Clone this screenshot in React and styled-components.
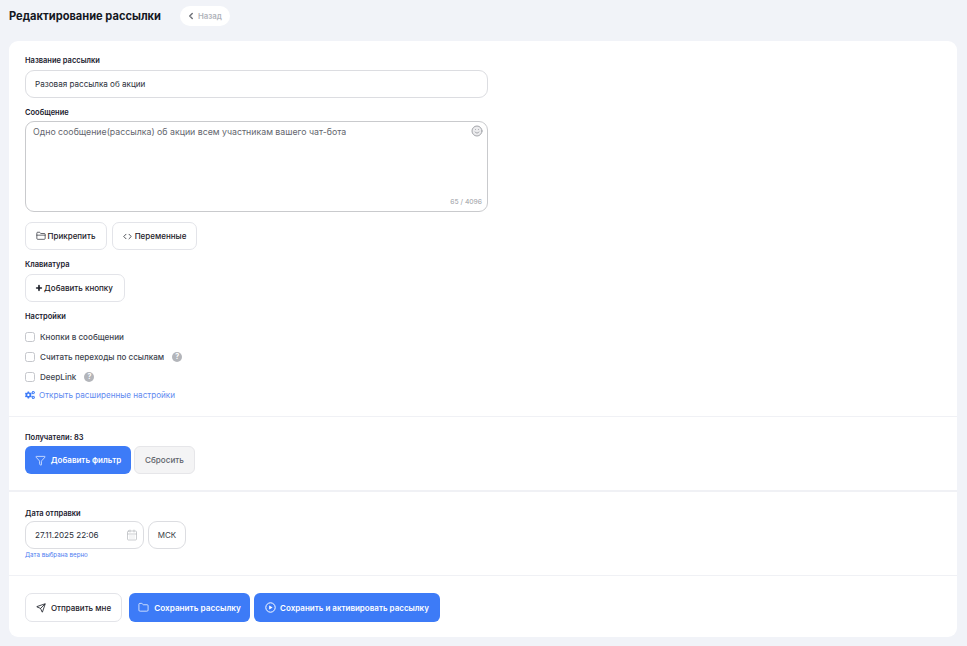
import React from "react";
import styled, { createGlobalStyle } from "styled-components";
import { ChevronLeft, Folder, FolderClosed, Code, Plus, Filter, CalendarDays, Send, Smile } from "lucide-react";
import { FaCogs } from "react-icons/fa";

const GlobalStyle = createGlobalStyle`
    html, body {
        margin: 0;
        padding: 0;
        background-color: #f1f3f8;
        font-family: Inter, "Liberation Sans", sans-serif;
        color: #1b1f2a;
    }
    * {
        box-sizing: border-box;
    }
`;

const Page = styled.div`
    width: 967px;
    height: 646px;
    padding: 6px 10px 9px 9px;
    display: flex;
    flex-direction: column;
    overflow: hidden;
`;

const Header = styled.div`
    display: flex;
    align-items: center;
    gap: 19px;
    height: 20px;
    margin-bottom: 15px;
`;

const Title = styled.h1`
    margin: 0;
    font-size: 11.1px;
    font-weight: 700;
    color: #14171f;
`;

const BackButton = styled.button`
    display: flex;
    align-items: center;
    gap: 2px;
    height: 20px;
    width: 50px;
    padding: 0 0 0 6px;
    border: none;
    border-radius: 10px;
    background: #fff;
    color: #b0b3ba;
    font: 600 7.8px Inter, sans-serif;
    svg {
        color: #6f7279;
    }
`;

const Card = styled.main`
    flex: 1;
    background: #fff;
    border-radius: 9px;
    display: flex;
    flex-direction: column;
`;

const Section = styled.section`
    padding: ${(p) => p.$padding};
    border-bottom: ${(p) => p.$line || 0}px solid #f0f1f5;
    height: ${(p) => p.$height}px;
    flex: none;
`;

const Label = styled.div`
    font-size: 7.5px;
    font-weight: 600;
    line-height: 12px;
    color: #1a202e;
    margin-bottom: ${(p) => p.$gap ?? 3}px;
`;

const Field = styled.div`
    width: 463px;
    height: 28px;
    border: 1px solid #dcdde1;
    border-radius: 9px;
    padding: 0 9px;
    display: flex;
    align-items: center;
    font-size: 8.1px;
    color: #2b2f3a;
    margin-bottom: 9px;
`;

const MessageBox = styled.div`
    position: relative;
    width: 463px;
    height: 91px;
    border: 1px solid #c9cacd;
    border-radius: 9px;
    padding: 4px 7px;
    font-size: 8.77px;
    line-height: 12px;
    color: #63666e;
    margin-bottom: 10px;
`;

const EmojiIcon = styled.span`
    position: absolute;
    top: 3px;
    right: 4px;
    display: flex;
    color: #a3a5aa;
    svg {
        fill: #ececee;
    }
`;

const Counter = styled.span`
    position: absolute;
    right: 5px;
    bottom: 5px;
    font-size: 6.8px;
    line-height: 9px;
    color: #9a9da4;
`;

const Row = styled.div`
    display: flex;
    gap: ${(p) => p.$gap ?? 5}px;
    margin-bottom: ${(p) => p.$bottom ?? 0}px;
`;

const OutlineButton = styled.button`
    display: flex;
    align-items: center;
    justify-content: center;
    gap: ${(p) => p.$gap ?? 3}px;
    width: ${(p) => p.$width}px;
    height: ${(p) => p.$height ?? 28}px;
    padding: 0 ${(p) => p.$right ?? 0}px 0 0;
    background: #fff;
    border: 1px solid #e3e4e9;
    border-radius: 7px;
    color: #1d2029;
    font: 500 8px Inter, sans-serif;
`;

const BlueButton = styled.button`
    display: flex;
    align-items: center;
    justify-content: center;
    gap: ${(p) => p.$gap ?? 5}px;
    width: ${(p) => p.$width}px;
    height: ${(p) => p.$height ?? 28}px;
    padding: 0;
    background: #3d7bf7;
    border: none;
    border-radius: 6px;
    color: #fff;
    font: 600 ${(p) => p.$size ?? 8}px Inter, sans-serif;
`;

const ResetButton = styled.button`
    width: 61px;
    height: 28px;
    padding: 0;
    background: #f4f4f5;
    border: 1px solid #e6e6e9;
    border-radius: 6px;
    color: #60646c;
    font: 500 8.1px Inter, sans-serif;
`;

const CheckRow = styled.label`
    display: flex;
    align-items: center;
    height: 10px;
    margin-bottom: 10px;
    font-size: 8.1px;
    font-weight: 500;
    color: #41454f;
`;

const CheckBox = styled.span`
    width: 10px;
    height: 10px;
    border: 1px solid #c5c7cc;
    border-radius: 2.5px;
    margin-right: 5px;
`;

const Hint = styled.span`
    width: 10px;
    height: 10px;
    margin-left: 8px;
    border-radius: 50%;
    background: #b3b5ba;
    color: #fff;
    font-size: 7px;
    font-weight: 700;
    line-height: 10px;
    text-align: center;
`;

const AdvancedLink = styled.a`
    display: flex;
    align-items: center;
    gap: 4px;
    font-size: 8.15px;
    line-height: 10px;
    color: #5f8af0;
    margin-top: -2px;
    svg {
        color: #3d7bf7;
    }
`;

const DateField = styled.div`
    width: 119px;
    height: 28px;
    border: 1px solid #dcdde1;
    border-radius: 9px;
    padding: 0 5px 0 9px;
    display: flex;
    align-items: center;
    justify-content: space-between;
    font-size: 8.1px;
    color: #2b2f3a;
    svg {
        color: #b5b7bc;
    }
`;

const ZoneField = styled.div`
    width: 38px;
    height: 28px;
    border: 1px solid #dcdde1;
    border-radius: 9px;
    display: flex;
    align-items: center;
    justify-content: center;
    font-size: 8px;
    color: #3a3e48;
`;

const DateNote = styled.div`
    font-size: 6.2px;
    line-height: 8px;
    margin-top: 2px;
    color: #4c7cf0;
`;

const PlayIcon = () => (
    <svg width="11" height="11" viewBox="0 0 11 11">
        <circle cx="5.5" cy="5.5" r="4.7" fill="none" stroke="currentColor" strokeWidth="1" />
        <path d="M4.2 3.4 L7.6 5.5 L4.2 7.6 Z" fill="currentColor" />
    </svg>
);

const App = () => {
    return (
        <Page>
            <GlobalStyle />
            <Header>
                <Title>Редактирование рассылки</Title>
                <BackButton>
                    <ChevronLeft size={10} strokeWidth={3.5} />
                    Назад
                </BackButton>
            </Header>
            <Card>
                <Section $height={376} $line={1} $padding="14px 16px 0">
                    <Label>Название рассылки</Label>
                    <Field>Разовая рассылка об акции</Field>
                    <Label $gap={2}>Сообщение</Label>
                    <MessageBox>
                        Одно сообщение(рассылка) об акции всем участникам вашего чат-бота
                        <EmojiIcon>
                            <Smile size={12} />
                        </EmojiIcon>
                        <Counter>65 / 4096</Counter>
                    </MessageBox>
                    <Row $bottom={9}>
                        <OutlineButton $width={82} $gap={2} $right={1}>
                            <FolderClosed size={10} strokeWidth={1.6} />
                            Прикрепить
                        </OutlineButton>
                        <OutlineButton $width={85} $gap={3}>
                            <Code size={9} />
                            Переменные
                        </OutlineButton>
                    </Row>
                    <Label>Клавиатура</Label>
                    <Row $bottom={9}>
                        <OutlineButton $width={100} $gap={1} $right={2}>
                            <Plus size={8} strokeWidth={5} />
                            Добавить кнопку
                        </OutlineButton>
                    </Row>
                    <Label $gap={9}>Настройки</Label>
                    <CheckRow>
                        <CheckBox />
                        Кнопки в сообщении
                    </CheckRow>
                    <CheckRow>
                        <CheckBox />
                        Считать переходы по ссылкам
                        <Hint>?</Hint>
                    </CheckRow>
                    <CheckRow>
                        <CheckBox />
                        DeepLink
                        <Hint>?</Hint>
                    </CheckRow>
                    <AdvancedLink>
                        <FaCogs size={10} />
                        Открыть расширенные настройки
                    </AdvancedLink>
                </Section>
                <Section $height={75} $line={2} $padding="15px 16px 0">
                    <Label $gap={2}>Получатели: 83</Label>
                    <Row $gap={3}>
                        <BlueButton $width={106}>
                            <Filter size={11} strokeWidth={1.5} />
                            Добавить фильтр
                        </BlueButton>
                        <ResetButton>Сбросить</ResetButton>
                    </Row>
                </Section>
                <Section $height={84} $line={1} $padding="16px 16px 0">
                    <Label $gap={1}>Дата отправки</Label>
                    <Row $gap={4}>
                        <DateField>
                            27.11.2025 22:06
                            <CalendarDays size={12} strokeWidth={1.4} />
                        </DateField>
                        <ZoneField>МСК</ZoneField>
                    </Row>
                    <DateNote>Дата выбрана верно</DateNote>
                </Section>
                <Section $padding="17px 16px 0">
                    <Row $gap={7}>
                        <OutlineButton $width={97} $height={29} $gap={5}>
                            <Send size={10} />
                            Отправить мне
                        </OutlineButton>
                        <Row $gap={4}>
                            <BlueButton $width={121} $height={29} $size={8.2}>
                                <Folder size={11} strokeWidth={1.6} />
                                Сохранить рассылку
                            </BlueButton>
                            <BlueButton $width={186} $height={29} $gap={4}>
                                <PlayIcon />
                                Сохранить и активировать рассылку
                            </BlueButton>
                        </Row>
                    </Row>
                </Section>
            </Card>
        </Page>
    );
};

export default App;
